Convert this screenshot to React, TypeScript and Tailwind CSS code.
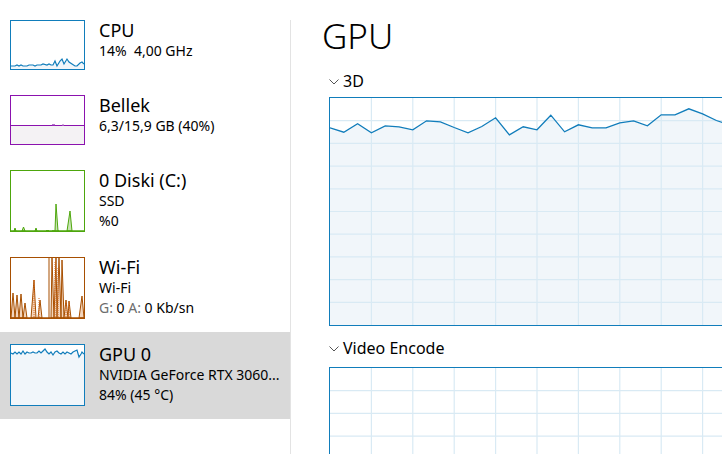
import React from "react";

const FONT = { fontFamily: '"Noto Sans", "Open Sans", sans-serif' };

function Thumb({ h, color, fill, children }: { h: number; color: string; fill?: string; children?: React.ReactNode }) {
  return (
    <div className="relative w-[75px] shrink-0 border" style={{ height: h, borderColor: color, background: fill ?? "#ffffff" }}>
      <svg className="absolute inset-0" width="73" height={h - 2} viewBox={`0 0 73 ${h - 2}`}>
        {children}
      </svg>
    </div>
  );
}

function Row({
  title,
  lines,
  thumb,
  selected,
}: {
  title: string;
  lines: React.ReactNode[];
  thumb: React.ReactNode;
  selected?: boolean;
}) {
  return (
    <div className={`flex pl-[10px] pt-[12px] pb-[13px] ${selected ? "bg-[#d9d9d9]" : ""}`}>
      {thumb}
      <div className="ml-[14px] flex flex-col text-black whitespace-nowrap">
        <div className="text-[18px] leading-[24px] -mt-[2px]">{title}</div>
        {lines.map((l, i) => (
          <div key={i} className={`text-[14px] leading-[20px] ${i === 0 ? "-mt-[1px]" : ""}`}>
            {l}
          </div>
        ))}
      </div>
    </div>
  );
}

const cpuPts = [
  [0, 45], [4, 45], [6, 44], [8, 45], [10, 44], [12, 45], [16, 45], [18, 44], [22, 44], [24, 45], [26, 44], [30, 44], [32, 43], [36, 44], [38, 43], [40, 44], [42, 44], [44, 40], [46, 45], [49, 40], [51, 38], [53, 43], [56, 38], [58, 41], [61, 43], [64, 45], [66, 45], [69, 42], [71, 41], [73, 43],
];

const gpuThumbPts = [
  [0, 8], [2, 9], [4, 7], [6, 9], [8, 7], [10, 9], [12, 6], [14, 9], [16, 7], [18, 8], [20, 8], [22, 7], [24, 8], [26, 8], [28, 6], [30, 8], [32, 6], [34, 4], [36, 7], [38, 9], [40, 7], [42, 10], [44, 7], [46, 6], [48, 8], [50, 9], [52, 7], [54, 9], [56, 7], [58, 8], [60, 9], [62, 7], [64, 6], [66, 5], [68, 12], [70, 9], [71, 7], [73, 9],
];

function ptsToStr(p: number[][]) {
  return p.map((q) => q.join(",")).join(" ");
}

const bigY = [29.8, 34.2, 25.8, 34.8, 27.8, 28.8, 31.8, 22.8, 23.8, 29.5, 34.8, 28.5, 19.8, 36.8, 28.8, 31.8, 17.2, 33.8, 26.8, 29.8, 29.8, 24.8, 22.8, 27.8, 16.8, 16.8, 10.8, 15.8, 22.5, 27, 28];

function BigChart({ h, data }: { h: number; data?: number[] }) {
  const w = 414;
  const cols = Array.from({ length: 9 }, (_, i) => (i + 1) * (w / 10));
  const rows = Array.from({ length: 9 }, (_, i) => (i + 1) * (h / 10));
  const pts = data ? data.map((y, i) => [i * (w / 30), y]) : [];
  return (
    <div className="relative w-[416px] shrink-0 border border-[#117dbb] bg-white" style={{ height: h + 2 }}>
      <svg className="absolute inset-0 left-0 top-0" width={w} height={h} viewBox={`0 0 ${w} ${h}`}>
        {data && <polygon points={`0,${h} ${ptsToStr(pts)} ${w},${h}`} fill="#f1f6fa" />}
        {cols.map((x) => (
          <line key={"c" + x} x1={x} x2={x} y1={0} y2={h} stroke="#d9eaf4" strokeWidth="1.2" />
        ))}
        {rows.map((y) => (
          <line key={"r" + y} x1={0} x2={w} y1={y} y2={y} stroke="#d9eaf4" strokeWidth="1.2" />
        ))}
        {data && <polyline points={ptsToStr(pts)} fill="none" stroke="#117dbb" strokeWidth="1.3" />}
      </svg>
    </div>
  );
}

function Chevron() {
  return (
    <svg width="10" height="6" viewBox="0 0 10 6" className="mr-[4px] mt-[1px]">
      <polyline points="0.5,0.5 5,5 9.5,0.5" fill="none" stroke="#555" strokeWidth="1" />
    </svg>
  );
}

export default function App() {
  return (
    <div className="w-[722px] h-[454px] overflow-hidden bg-white flex" style={FONT}>
      <div className="w-[290px] shrink-0 flex flex-col pt-[8px]">
        <Row
          title="CPU"
          lines={["14%\u00a0\u00a04,00 GHz"]}
          thumb={
            <Thumb h={50} color="#117dbb">
              <polygon points={`0,48 ${ptsToStr(cpuPts)} 73,48`} fill="#f1f6fa" />
              <polyline points={ptsToStr(cpuPts)} fill="none" stroke="#117dbb" strokeWidth="1.2" />
            </Thumb>
          }
        />
        <Row
          title="Bellek"
          lines={["6,3/15,9 GB (40%)"]}
          thumb={
            <Thumb h={50} color="#8b12ae">
              <rect x="0" y="29.5" width="73" height="19" fill="#f4f2f4" />
              <line x1="0" x2="73" y1="29.5" y2="29.5" stroke="#8b12ae" strokeWidth="1.2" />
              <line x1="41" x2="44" y1="28.8" y2="28.8" stroke="#a052c0" strokeWidth="1.2" />
              <line x1="51" x2="53" y1="28.8" y2="28.8" stroke="#c090d0" strokeWidth="1.2" />
            </Thumb>
          }
        />
        <Row
          title="0 Diski (C:)"
          lines={["SSD", "%0"]}
          thumb={
            <Thumb h={62} color="#4da60c">
              <g fill="#c9e3b4" stroke="#4da60c" strokeWidth="1">
                <polygon points="3,60 4,57 5,60" />
                <polygon points="11,60 12.5,56 14,60" />
                <polygon points="24,60 25,57 26,60" />
                <polygon points="41,60 44,60 45,33 47,60 48,60" />
                <polygon points="56,60 59,40 61,60" />
              </g>
              <line x1="0" x2="73" y1="60" y2="60" stroke="#4da60c" strokeWidth="1.5" />
              <line x1="35" x2="38" y1="59.5" y2="59.5" stroke="#4da60c" strokeWidth="1" />
            </Thumb>
          }
        />
        <Row
          title="Wi-Fi"
          lines={[
            "Wi-Fi",
            <span key="g">
              <span className="text-[#6d6d6d]">G: </span>0 <span className="text-[#6d6d6d]">A: </span>0 Kb/sn
            </span>,
          ]}
          thumb={
            <Thumb h={62} color="#a74f01">
              <g fill="#f3d5bd" stroke="#a74f01" strokeWidth="1">
                <polygon points="0,60 2,35 4,60 6,37 8,60 10,36 12,60 14,45 16,60" />
                <polygon points="20,60 23,22 25,60" />
                <polygon points="27,60 29,42 31,60" />
                <polygon points="40,60 41,0 43,60 45,0 46,60 48,0 50,60 51,2 53,60" />
                <polygon points="53,60 55,42 57,60 58,43 60,60" />
                <polygon points="68,60 71,38 73,60" />
              </g>
              <g stroke="#d96a20" strokeWidth="1" strokeDasharray="1 1" fill="none">
                <line x1="23" x2="23" y1="22" y2="60" />
                <line x1="28" x2="28" y1="40" y2="60" />
                <line x1="44" x2="44" y1="4" y2="60" />
                <line x1="47" x2="47" y1="10" y2="60" />
                <line x1="55" x2="55" y1="44" y2="60" />
                <line x1="58" x2="58" y1="44" y2="60" />
              </g>
              <line x1="38" x2="38" y1="0" y2="60" stroke="#a74f01" strokeWidth="1" />
              <line x1="0" x2="73" y1="60" y2="60" stroke="#a74f01" strokeWidth="1.5" />
            </Thumb>
          }
        />
        <Row
          selected
          title="GPU 0"
          lines={["NVIDIA GeForce RTX 3060...", "84% (45 °C)"]}
          thumb={
            <Thumb h={62} color="#117dbb" fill="#ffffff">
              <polygon points={`0,60 ${ptsToStr(gpuThumbPts)} 73,60`} fill="#f1f6fa" />
              <polyline points={ptsToStr(gpuThumbPts)} fill="none" stroke="#117dbb" strokeWidth="1.2" />
            </Thumb>
          }
        />
      </div>
      <div className="w-px shrink-0 bg-[#e3e3e3] mt-[20px]" />
      <div className="flex-1 flex flex-col pl-[30px] min-w-0">
        <div className="text-[35px] leading-[40px] mt-[16px] ml-[1px] text-black font-light">GPU</div>
        <div className="flex items-center ml-[8px] mt-[15px] text-[16px] leading-[20px] text-black">
          <Chevron />
          3D
        </div>
        <div className="ml-[8px] mt-[6px]">
          <BigChart h={227} data={bigY} />
        </div>
        <div className="flex items-center ml-[8px] mt-[12px] text-[16px] leading-[20px] text-black">
          <Chevron />
          Video Encode
        </div>
        <div className="ml-[8px] mt-[9px]">
          <BigChart h={227} />
        </div>
      </div>
    </div>
  );
}
